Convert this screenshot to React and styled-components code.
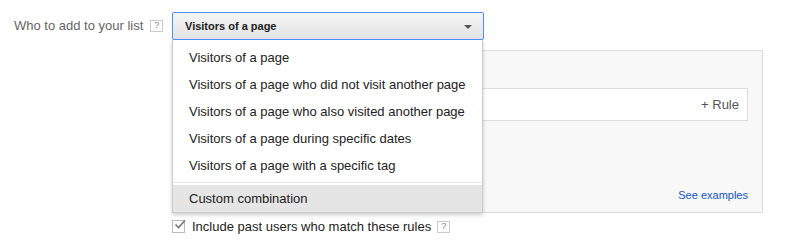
import styled, { createGlobalStyle } from 'styled-components';

const GlobalStyle = createGlobalStyle`
	body {
		margin: 0;
		background: #fff;
		font-family: 'Liberation Sans', Arial, sans-serif;
	}
`;

const options = [
	'Visitors of a page',
	'Visitors of a page who did not visit another page',
	'Visitors of a page who also visited another page',
	'Visitors of a page during specific dates',
	'Visitors of a page with a specific tag',
];

const HelpIcon = () => <Help>?</Help>;

const App = () => {
	return (
		<>
			<GlobalStyle />
			<Page>
				<FieldRow>
					<Label>
						Who to add to your list
						<HelpIcon />
					</Label>
					<Field>
						<SelectWrap>
							<Select>
								<span>Visitors of a page</span>
								<Arrow />
							</Select>
							<Menu>
								{options.map((o) => (
									<MenuItem key={o}>{o}</MenuItem>
								))}
								<Separator />
								<MenuItem active>Custom combination</MenuItem>
							</Menu>
						</SelectWrap>
						<Panel>
							<PanelHeader />
							<RuleBox>
								<RuleButton>+ Rule</RuleButton>
							</RuleBox>
							<PanelFooter>
								<Link>See examples</Link>
							</PanelFooter>
						</Panel>
						<CheckRow>
							<Checkbox>
								<svg width='12' height='11' viewBox='0 0 12 11'>
									<path
										d='M1.5 5.5 L4.5 8.5 L11 1.5'
										fill='none'
										stroke='#777'
										strokeWidth='1.6'
									/>
								</svg>
							</Checkbox>
							<CheckLabel>Include past users who match these rules</CheckLabel>
							<HelpIcon />
						</CheckRow>
					</Field>
				</FieldRow>
			</Page>
		</>
	);
};

export default App;

const Page = styled.div`
	padding: 12px 0 0 14px;
	width: 799px;
	height: 243px;
	box-sizing: border-box;
	overflow: hidden;
`;

const FieldRow = styled.div`
	display: flex;
	align-items: flex-start;
`;

const Label = styled.div`
	width: 158px;
	display: flex;
	align-items: center;
	gap: 7px;
	font-size: 13px;
	color: #666;
	padding-top: 2px;
	height: 23px;
`;

const Help = styled.span`
	display: inline-flex;
	align-items: center;
	justify-content: center;
	width: 11px;
	height: 10px;
	border: 1px solid #ccc;
	font-size: 9px;
	color: #888;
	line-height: 1;
	background: #fff;
`;

const Field = styled.div`
	width: 591px;
	display: flex;
	flex-direction: column;
`;

const SelectWrap = styled.div`
	position: relative;
	width: 312px;
`;

const Select = styled.div`
	box-sizing: border-box;
	height: 28px;
	border: 1px solid #4d90fe;
	border-radius: 2px;
	background: linear-gradient(#f5f5f5, #e3e3e3);
	display: flex;
	align-items: center;
	justify-content: space-between;
	padding: 0 11px 0 12px;
	font-size: 11px;
	font-weight: bold;
	color: #222;
`;

const Arrow = styled.span`
	width: 0;
	height: 0;
	border-left: 4px solid transparent;
	border-right: 4px solid transparent;
	border-top: 4px solid #555;
	margin-top: 1px;
`;

const Menu = styled.div`
	position: absolute;
	top: 28px;
	left: 0;
	width: 311px;
	box-sizing: border-box;
	background: #fff;
	border: 1px solid #ccc;
	border-top: none;
	box-shadow: 0 2px 4px rgba(0, 0, 0, 0.2);
	padding: 4px 0 0;
	z-index: 2;
`;

const MenuItem = styled.div`
	height: 27px;
	display: flex;
	align-items: center;
	padding-left: 16px;
	font-size: 13px;
	color: #222;
	background: ${(p) => (p.active ? '#e5e5e5' : 'transparent')};
`;

const Separator = styled.div`
	height: 1px;
	background: #e5e5e5;
	margin: 3px 0 2px;
`;

const Panel = styled.div`
	margin-top: 10px;
	box-sizing: border-box;
	height: 163px;
	background: #f8f8f8;
	border: 1px solid #ddd;
	padding: 16px 14px 0 16px;
	display: flex;
	flex-direction: column;
`;

const PanelHeader = styled.div`
	height: 21px;
`;

const RuleBox = styled.div`
	height: 33px;
	box-sizing: border-box;
	background: #fff;
	border: 1px solid #ddd;
	display: flex;
	align-items: center;
	justify-content: flex-end;
	padding-right: 8px;
`;

const RuleButton = styled.span`
	font-size: 13px;
	color: #555;
`;

const PanelFooter = styled.div`
	margin-top: auto;
	height: 35px;
	display: flex;
	justify-content: flex-end;
	align-items: center;
`;

const Link = styled.a`
	font-size: 11px;
	color: #15c;
	cursor: pointer;
`;

const CheckRow = styled.div`
	margin-top: 6px;
	display: flex;
	align-items: center;
	gap: 7px;
`;

const Checkbox = styled.span`
	width: 11px;
	height: 11px;
	border: 1px solid #bbb;
	position: relative;
	display: inline-block;
	svg {
		position: absolute;
		left: 1px;
		top: -2px;
	}
`;

const CheckLabel = styled.span`
	font-size: 13px;
	color: #222;
	margin-right: -1px;
`;
